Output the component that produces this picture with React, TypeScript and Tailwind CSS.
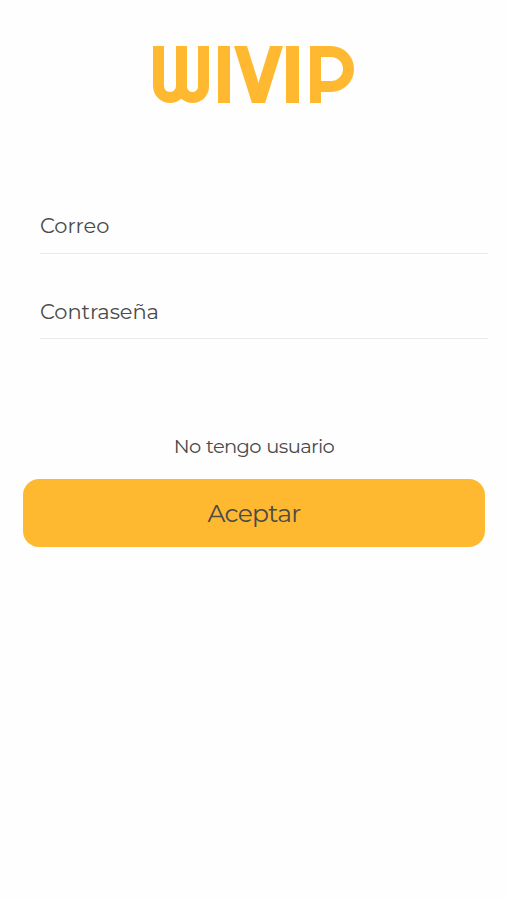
import clsx from "clsx";
import type { InputHTMLAttributes } from "react";

const Logo = () => {
  return (
    <div role="img" aria-label="WIVIP" className="flex h-[56.5px] w-[201px] items-start text-[#ffb931]">
      <div className="h-full w-[34px] rounded-b-[17px] border-[11px] border-t-0 border-current" />
      <div className="-ml-[11px] h-full w-[33px] rounded-b-[17px] border-[11px] border-t-0 border-current" />
      <div className="ml-[9px] h-full w-[12.5px] bg-current" />
      <div className="ml-[4px] flex h-full w-[48.5px] justify-between">
        <div className="h-full w-[13px] origin-top skew-x-[17.4deg] bg-current" />
        <div className="h-full w-[13px] origin-top -skew-x-[17.4deg] bg-current" />
      </div>
      <div className="ml-[3.5px] h-full w-[12.5px] bg-current" />
      <div className="ml-[11px] h-full w-[44.5px]">
        <div className="h-[45.5px] w-full rounded-r-[23px] border-[11px] border-current" />
        <div className="h-[11px] w-[11px] bg-current" />
      </div>
    </div>
  );
};

const Field = ({ className, ...props }: InputHTMLAttributes<HTMLInputElement>) => {
  return (
    <input
      {...props}
      className={clsx(
        "block h-[54px] w-full border-b border-[#e9e9e9] bg-transparent text-[#4a4a4a] outline-none placeholder:text-[#4a4a4a] placeholder:opacity-100",
        className
      )}
    />
  );
};

const App = () => {
  return (
    <main className="flex min-h-[900px] w-full flex-col bg-[#fefefe] pt-[46px] font-['Montserrat','Inter',sans-serif] text-[#4a4a4a]">
      <div className="pl-[153px]">
        <Logo />
      </div>
      <form className="mt-[97.5px] flex flex-col">
        <div className="flex flex-col gap-[31px] pr-[19px] pl-10 text-[21px] tracking-[-0.1px]">
          <Field type="email" placeholder="Correo" className="pb-0.5" />
          <Field type="password" placeholder="Contraseña" />
        </div>
        <button
          type="button"
          className="mt-[91px] h-8 self-center pl-px text-[19.5px] leading-8 tracking-[-0.65px] [word-spacing:1px]"
        >
          No tengo usuario
        </button>
        <button
          type="button"
          className="mt-[17px] mr-[22px] ml-[23px] h-[68px] rounded-[16px] bg-[#ffb931] pt-0.5 text-[25px] tracking-[-0.7px]"
        >
          Aceptar
        </button>
      </form>
    </main>
  );
};

export default App;
